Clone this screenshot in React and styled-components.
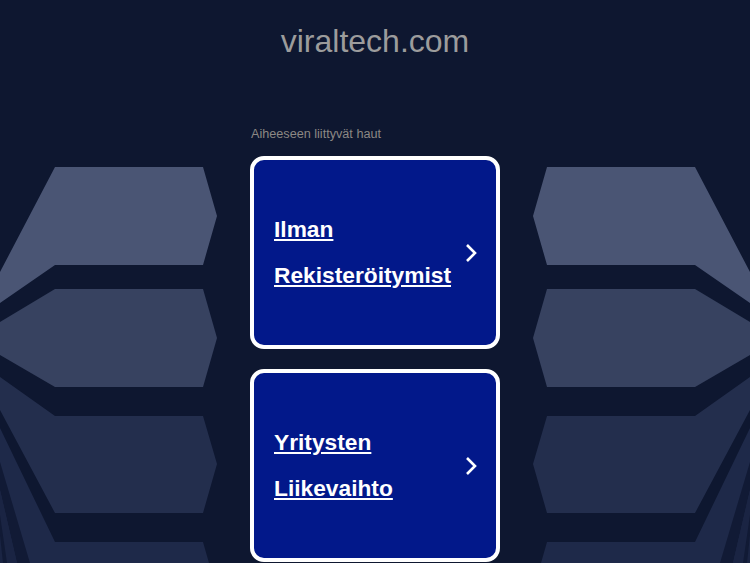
import React from "react";
import styled, { createGlobalStyle } from "styled-components";

const GlobalStyle = createGlobalStyle`
  html, body {
    margin: 0;
    padding: 0;
    background: #0e1730;
  }
  body {
    font-family: "Liberation Sans", Arial, sans-serif;
  }
`;

const Page = styled.div`
  position: relative;
  min-height: 100vh;
  overflow: hidden;
  background: #0e1730;
`;

const Backdrop = styled.svg`
  position: absolute;
  top: 0;
  left: 50%;
  margin-left: -375px;
  width: 750px;
  height: 640px;
  z-index: 0;
  pointer-events: none;
`;

const Content = styled.main`
  position: relative;
  z-index: 1;
  display: flex;
  flex-direction: column;
  align-items: center;
  padding-top: 23px;
`;

const Domain = styled.h1`
  margin: 0;
  font-size: 32px;
  line-height: 36px;
  font-weight: 400;
  color: #9c9c9c;
`;

const Related = styled.section`
  width: 250px;
  margin-top: 68px;
  display: flex;
  flex-direction: column;
`;

const Label = styled.div`
  font-size: 12.65px;
  line-height: 14px;
  color: #8c8884;
  padding-left: 1px;
  margin-bottom: 15px;
`;

const CardList = styled.div`
  display: flex;
  flex-direction: column;
  gap: 20px;
`;

const Card = styled.a`
  box-sizing: border-box;
  height: 193px;
  display: flex;
  align-items: center;
  justify-content: space-between;
  padding: 0 19px 0 20px;
  background: #02188a;
  border: 4px solid #ffffff;
  border-radius: 14px;
  text-decoration: none;
  cursor: pointer;
`;

const CardText = styled.span`
  font-size: 22.75px;
  line-height: 45.5px;
  font-weight: 700;
  color: #ffffff;
  text-decoration: underline;
  text-decoration-thickness: 2px;
  text-underline-offset: 2px;
`;

const Chevron = styled.svg`
  flex: none;
  width: 12px;
  height: 20px;
`;

const LeftShapes = () => (
  <>
    <polygon fill="#4a5574" points="55,167 203,167 217,216 203,265 55,265 0,303 0,272" />
    <polygon fill="#374260" points="55,289 203,289 217,338 203,387 55,387 0,355 0,322" />
    <polygon fill="#232e4d" points="55,416 203,416 217,464 203,513 55,513 0,410 0,377" />
    <polygon fill="#1e2949" points="0,428 55,542 203,542 217,591 203,640 0,640" />
    <polygon fill="#111a35" points="0,462 30,563 34,640 17,640 17,563 0,490" />
    <polygon fill="#1a2443" points="0,490 17,563 17,640 0,640" />
    <polygon fill="#111a35" points="0,515 7,563 8,640 3,640 3,563 0,535" />
  </>
);

const items = [
  ["Ilman", "Rekisteröitymist"],
  ["Yritysten", "Liikevaihto"],
];

export default function App() {
  return (
    <>
      <GlobalStyle />
      <Page>
        <Backdrop viewBox="0 0 750 640" aria-hidden="true">
          <g>
            <LeftShapes />
          </g>
          <g transform="translate(750,0) scale(-1,1)">
            <LeftShapes />
          </g>
        </Backdrop>
        <Content>
          <Domain>viraltech.com</Domain>
          <Related>
            <Label>Aiheeseen liittyvät haut</Label>
            <CardList>
              {items.map(([a, b]) => (
                <Card key={a} href="#">
                  <CardText>
                    {a}
                    <br />
                    {b}
                  </CardText>
                  <Chevron viewBox="0 0 12 20">
                    <path
                      d="M2 2 L10 10 L2 18"
                      fill="none"
                      stroke="#ffffff"
                      strokeWidth="2.6"
                      strokeLinecap="butt"
                      strokeLinejoin="miter"
                    />
                  </Chevron>
                </Card>
              ))}
            </CardList>
          </Related>
        </Content>
      </Page>
    </>
  );
}
